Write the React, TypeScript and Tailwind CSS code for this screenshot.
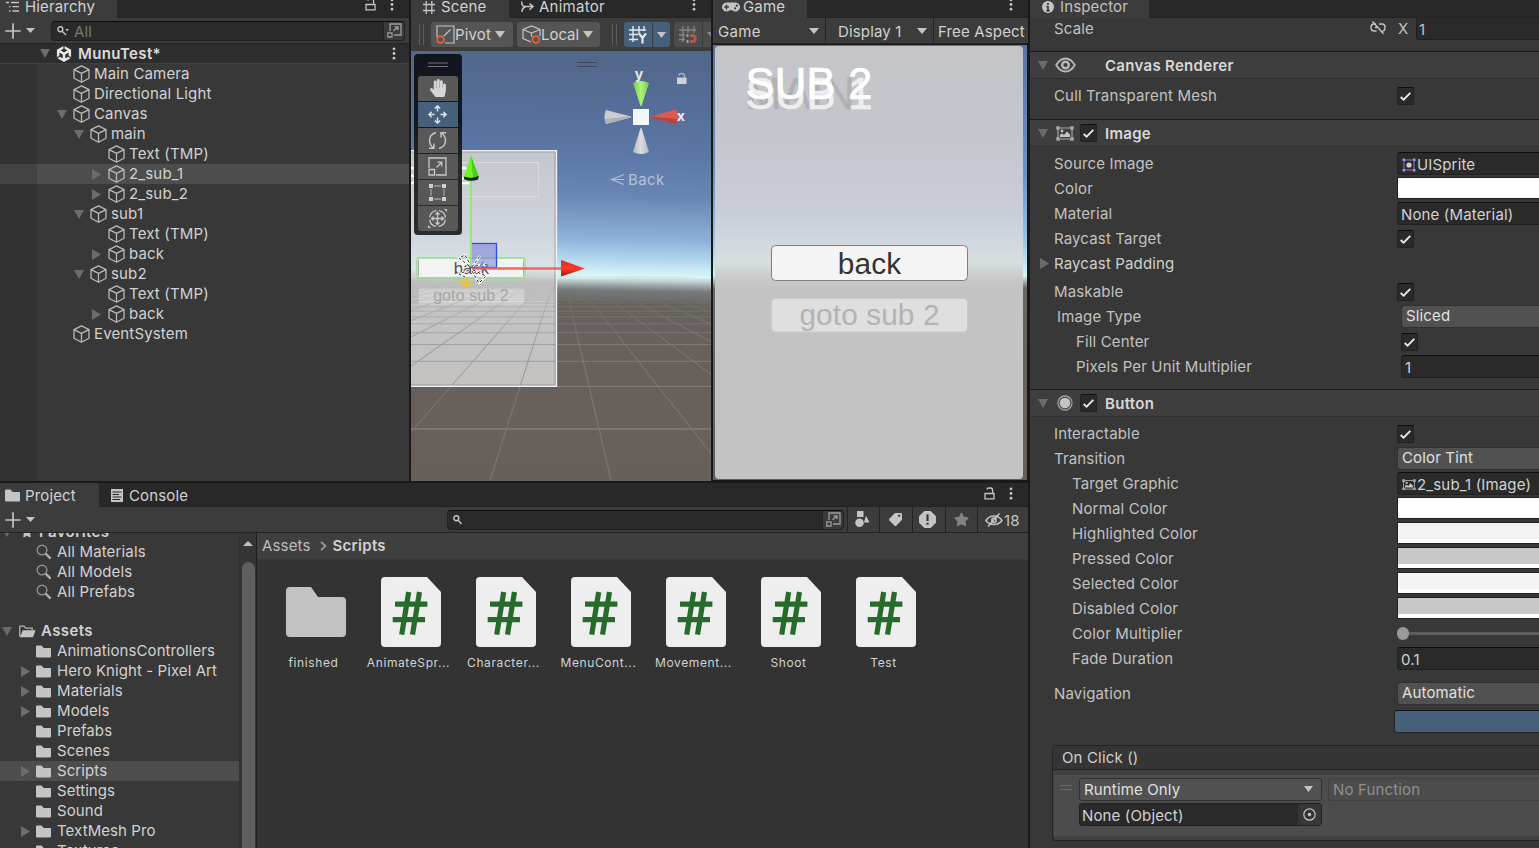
import React from "react";
import { SiUnity } from "react-icons/si";
import { FaGamepad, FaHandPaper, FaStar, FaTag } from "react-icons/fa";

/* ---------- icons ---------- */

function Cube({ className = "" }: { className?: string }) {
  return (
    <svg width="17" height="18" viewBox="0 0 17 18" fill="none" stroke="#b9b9b9" strokeWidth="1.3" strokeLinejoin="round" className={"shrink-0 " + className}>
      <path d="M8.5 .9 16 4.6V13.2L8.5 17.2 1 13.2V4.6ZM1 4.6 8.5 8.4 16 4.6M8.5 8.4V17" />
    </svg>
  );
}

function Down({ color = "#6c6c6c", w = 10, h = 9 }: { color?: string; w?: number; h?: number }) {
  return (
    <svg width={w} height={h} viewBox="0 0 10 9" preserveAspectRatio="none" className="shrink-0">
      <path d="M0 0H10L5 9Z" fill={color} />
    </svg>
  );
}

function Right() {
  return (
    <svg width="9" height="11" viewBox="0 0 9 11" className="shrink-0">
      <path d="M0 0 9 5.5 0 11Z" fill="#6c6c6c" />
    </svg>
  );
}

function Dots({ className = "" }: { className?: string }) {
  return (
    <svg width="4" height="13" viewBox="0 0 4 13" fill="#c4c4c4" className={"shrink-0 " + className}>
      <circle cx="2" cy="1.8" r="1.4" />
      <circle cx="2" cy="6.5" r="1.4" />
      <circle cx="2" cy="11.2" r="1.4" />
    </svg>
  );
}

function Lock({ className = "" }: { className?: string }) {
  return (
    <svg width="11" height="13" viewBox="0 0 11 13" fill="none" stroke="#c4c4c4" strokeWidth="1.3" className={"shrink-0 " + className}>
      <path d="M1 6.5H10V11.8H1ZM8.6 6.5V3.2Q8.6 1 6.6 1H4.8Q3.2 1 3 2.6" />
    </svg>
  );
}

function AddMenu() {
  return (
    <div className="flex items-center">
      <svg width="16" height="16" viewBox="0 0 16 16">
        <path d="M.3 8H15.7M8 .3V15.7" stroke="#c4c4c4" strokeWidth="1.7" />
      </svg>
      <div className="ml-[5px] flex">
        <Down color="#c4c4c4" w={9} h={5} />
      </div>
    </div>
  );
}

function Pop() {
  return (
    <svg width="15" height="15" viewBox="0 0 15 15" fill="none" stroke="#9d9d9d" strokeWidth="1.3">
      <path d="M3 8V1H14V12H7M.8 9.8H5V14H.8ZM6.5 8 10.8 3.8M7.5 3.8H11V7.3" />
    </svg>
  );
}

function Folder({ w = 15, h = 13 }: { w?: number; h?: number }) {
  return (
    <svg width={w} height={h} viewBox="0 0 15 13" fill="#c4c4c4" className="shrink-0">
      <path d="M0 1.6Q0 .6 1 .6H5.6L7.6 3H14Q15 3 15 4V11.6Q15 12.6 14 12.6H1Q0 12.6 0 11.6Z" />
    </svg>
  );
}

function OpenFolder() {
  return (
    <svg width="17" height="13" viewBox="0 0 17 13" className="shrink-0">
      <path d="M.7 11.5V1.2H5L6.8 3.2H13.2V5" fill="none" stroke="#b0b0b0" strokeWidth="1.3" />
      <path d="M3.8 5.2H16.6L14 12.2H.8Z" fill="#c4c4c4" />
    </svg>
  );
}

function Magnifier() {
  return (
    <svg width="16" height="16" viewBox="0 0 16 16" fill="none" className="shrink-0">
      <circle cx="6" cy="6" r="4.8" stroke="#909090" strokeWidth="1.4" />
      <path d="M9.8 9.8 14.6 14.6" stroke="#b5b5b5" strokeWidth="2.2" />
    </svg>
  );
}

function ImageIcon({ s = 18 }: { s?: number }) {
  return (
    <svg width={s} height={(s * 15) / 18} viewBox="0 0 18 15" className="shrink-0">
      <path d="M2 2H16V13H2Z" fill="none" stroke="#a8a8a8" strokeWidth="1.2" />
      <path d="M.3 .3H3.7V3.7H.3ZM14.3 .3H17.7V3.7H14.3ZM.3 11.3H3.7V14.7H.3ZM14.3 11.3H17.7V14.7H14.3Z" fill="#a8a8a8" />
      <path d="M4 11V8.5L6 7.5 8 9 11 5.5 14 8.5V11Z" fill="#c4c4c4" />
      <circle cx="6" cy="5" r="1.4" fill="#c4c4c4" />
    </svg>
  );
}

function CheckBox() {
  return (
    <span className="flex h-[18px] w-[17px] shrink-0 items-center justify-center rounded-[2px] border border-[#212121] border-t-[#0d0d0d] bg-[#2a2a2a]">
      <svg width="11" height="9" viewBox="0 0 11 9" fill="none" stroke="#e8e8e8" strokeWidth="1.9">
        <path d="M.7 5 3.6 7.6 10.3 .8" />
      </svg>
    </span>
  );
}

/* ---------- hierarchy ---------- */

type Node = { name: string; pad: string; arrow?: "down" | "right"; selected?: boolean };

const NODES: Node[] = [
  { name: "Main Camera", pad: "pl-[20px]" },
  { name: "Directional Light", pad: "pl-[20px]" },
  { name: "Canvas", pad: "pl-[20px]", arrow: "down" },
  { name: "main", pad: "pl-[37px]", arrow: "down" },
  { name: "Text (TMP)", pad: "pl-[55px]" },
  { name: "2_sub_1", pad: "pl-[55px]", arrow: "right", selected: true },
  { name: "2_sub_2", pad: "pl-[55px]", arrow: "right" },
  { name: "sub1", pad: "pl-[37px]", arrow: "down" },
  { name: "Text (TMP)", pad: "pl-[55px]" },
  { name: "back", pad: "pl-[55px]", arrow: "right" },
  { name: "sub2", pad: "pl-[37px]", arrow: "down" },
  { name: "Text (TMP)", pad: "pl-[55px]" },
  { name: "back", pad: "pl-[55px]", arrow: "right" },
  { name: "EventSystem", pad: "pl-[20px]" },
];

function Hierarchy() {
  return (
    <section className="flex w-[409px] shrink-0 flex-col bg-[#383838]">
      <div className="flex h-[18px] shrink-0 border-b border-[#232323] bg-[#282828]">
        <div className="-mb-px flex w-[117px] items-center bg-[#3c3c3c] pb-[4px] pl-[6px]">
          <svg width="14" height="12" viewBox="0 0 14 12" fill="none" stroke="#c4c4c4" strokeWidth="1.3">
            <path d="M0 1.5H3M5 1.5H13M3 5.7H4.5M6.500 5.7H13M3 10H4.5M6.500 10H13" />
          </svg>
          <span className="ml-[5px] pb-[2px]">Hierarchy</span>
        </div>
        <Lock className="-mt-[2px] ml-[248px]" />
        <Dots className="-mt-[2px] ml-[14px]" />
      </div>
      <div className="flex h-[25px] shrink-0 items-center bg-[#3c3c3c] pl-[5px]">
        <AddMenu />
        <div className="ml-[16px] flex h-[20px] w-[354px] items-center rounded-[4px] border border-[#212121] border-t-[#0d0d0d] bg-[#2a2a2a] pl-[5px]">
          <svg width="12" height="10" viewBox="0 0 12 10" fill="none" stroke="#c4c4c4" strokeWidth="1.4">
            <circle cx="3.3" cy="3.3" r="2.5" />
            <path d="M5.2 5.2 9 9" />
            <path d="M8.3 3H12L10.1 5.2Z" fill="#c4c4c4" stroke="none" />
          </svg>
          <span className="ml-[5px] pt-px text-[#7a7a7a]">All</span>
          <span className="ml-auto flex h-full w-[21px] items-center justify-center rounded-r-[4px] border-l border-[#212121] bg-[#3a3a3a]">
            <Pop />
          </span>
        </div>
      </div>
      <div className="flex h-[21px] shrink-0 items-center border-t border-b border-t-[#232323] border-b-[#3f3f3f] bg-[#2d2d2d] pl-[40px]">
        <Down />
        <SiUnity className="ml-[6px] text-[#e6e6e6]" size={16} />
        <span className="ml-[6px] font-semibold tracking-[0.35px] text-[#dcdcdc]">MunuTest*</span>
        <Dots className="mr-[13px] ml-auto" />
      </div>
      <div className="flex flex-1 flex-col bg-[linear-gradient(to_right,#323232_37px,#383838_37px)]">
        {NODES.map((n, i) => (
          <div key={i} className={"flex h-[20px] items-center " + (n.selected ? "bg-[linear-gradient(to_right,#424242_37px,#4d4d4d_37px)]" : "")}>
            <div className="w-[37px]" />
            <div className={"flex items-center " + n.pad}>
              <div className="flex w-[16px]">{n.arrow === "down" ? <Down /> : n.arrow === "right" ? <Right /> : null}</div>
              <Cube />
              <span className="ml-[4px] pb-[2px]">{n.name}</span>
            </div>
          </div>
        ))}
      </div>
    </section>
  );
}

/* ---------- scene ---------- */

const ROWS = Array.from({ length: 26 }, (_, k) => 262 + 1 / (0.00599 + 0.00204 * k));
const RAYS = Array.from({ length: 31 }, (_, k) => -70 + 121 * (k - 15));

function Tool({ children, active, end }: { children: React.ReactNode; active?: boolean; end?: string }) {
  return (
    <div className={"flex h-[25px] w-[40px] items-center justify-center pr-px pb-px " + (active ? "bg-[#46607c] " : "bg-[#585858] ") + (end ?? "")}>{children}</div>
  );
}

function SceneView() {
  return (
    <div className="relative h-[430px] w-[300px] overflow-hidden">
      <svg width="300" height="430" viewBox="411 51 300 430" className="block">
        <defs>
          <linearGradient id="sky" x1="0" y1="51" x2="-8" y2="481" gradientUnits="userSpaceOnUse">
            <stop offset="0" stopColor="#52678c" />
            <stop offset=".12" stopColor="#566f9b" />
            <stop offset=".22" stopColor="#5c78a6" />
            <stop offset=".31" stopColor="#6886b4" />
            <stop offset=".41" stopColor="#8fb1d8" />
            <stop offset=".46" stopColor="#b4d8ef" />
            <stop offset=".495" stopColor="#d8f6f8" />
            <stop offset=".505" stopColor="#d0e8e8" />
            <stop offset=".53" stopColor="#77797a" />
            <stop offset=".56" stopColor="#67625e" />
            <stop offset="1" stopColor="#675f5a" />
          </linearGradient>
          <linearGradient id="fade" x1="0" y1="278" x2="0" y2="345" gradientUnits="userSpaceOnUse">
            <stop offset="0" stopColor="#fff" stopOpacity=".1" />
            <stop offset="1" stopColor="#fff" />
          </linearGradient>
          <linearGradient id="panel" x1="0" y1="151" x2="0" y2="386" gradientUnits="userSpaceOnUse">
            <stop offset="0" stopColor="#c3c6cd" />
            <stop offset=".35" stopColor="#d0d5dd" />
            <stop offset=".5" stopColor="#dbe3e6" />
            <stop offset=".56" stopColor="#c4c5c5" />
            <stop offset="1" stopColor="#c3c2c1" />
          </linearGradient>
          <mask id="gridMask" maskUnits="userSpaceOnUse" x="411" y="51" width="300" height="430">
            <rect x="411" y="276" width="300" height="205" fill="url(#fade)" />
          </mask>
          <clipPath id="panelClip">
            <rect x="411" y="151" width="145" height="234" />
          </clipPath>
          <linearGradient id="coneG" x1="0" x2="1">
            <stop offset="0" stopColor="#7fc552" />
            <stop offset=".5" stopColor="#aaf57c" />
            <stop offset="1" stopColor="#7fc552" />
          </linearGradient>
          <linearGradient id="coneW" x1="0" x2="1">
            <stop offset="0" stopColor="#b5b8c0" />
            <stop offset=".5" stopColor="#dcdde1" />
            <stop offset="1" stopColor="#b5b8c0" />
          </linearGradient>
          <linearGradient id="coneR" x1="0" y1="0" x2="0" y2="1">
            <stop offset="0" stopColor="#d8281e" />
            <stop offset=".5" stopColor="#ff3a2a" />
            <stop offset="1" stopColor="#a5150e" />
          </linearGradient>
        </defs>
        <rect x="411" y="51" width="300" height="430" fill="url(#sky)" />
        <g mask="url(#gridMask)" fill="none" stroke="#7f7b78" strokeWidth="1">
          {ROWS.map((y, i) => (
            <path key={i} d={`M411 ${y.toFixed(1)}H711`} />
          ))}
          {RAYS.map((x, i) => (
            <path key={i} d={`M560 262 ${560 + x} 480`} />
          ))}
          <path d="M411 429H711" strokeWidth="1.6" />
        </g>
        <rect x="411" y="151" width="145" height="235" fill="url(#panel)" />
        <rect x="380" y="162.500" width="158.500" height="34" fill="none" stroke="#d8dade" strokeWidth="1" />
        <text x="403" y="184" fontFamily="Liberation Sans, sans-serif" fontSize="23" fill="#ffffff" stroke="#ffffff" strokeWidth=".4">SUB 2</text>

        <rect x="417" y="258" width="108" height="20" rx="2" fill="#f3f3f3" stroke="#8fdc8a" strokeWidth="1.3" />
        <path d="M418.500 260V276M523.500 260V276" stroke="#8c8c8c" strokeWidth=".7" />
        <rect x="418" y="288" width="107" height="17" rx="2" fill="#d9d9d9" stroke="#c0c0c0" strokeWidth="1" />
        <text x="471" y="301" textAnchor="middle" fontFamily="Liberation Sans, sans-serif" fontSize="16" fill="#a9a9a9" letterSpacing=".1">goto sub 2</text>
        <text x="471.500" y="274" textAnchor="middle" fontFamily="Liberation Sans, sans-serif" fontSize="16.500" fill="#505050">back</text>
        <g mask="url(#gridMask)">
          <g stroke="#979694" strokeWidth="1" clipPath="url(#panelClip)">
            {ROWS.filter((y) => y < 386).map((y, i) => (
              <path key={i} d={`M411 ${y.toFixed(1)}H556`} strokeOpacity=".8" />
            ))}
            {RAYS.filter((x) => x < 0).map((x, i) => (
              <path key={i} d={`M560 262 ${560 + x} 480`} />
            ))}
          </g>
        </g>
        <path d="M411 150.800H556.500V386.200H411" fill="none" stroke="#eef0f2" strokeWidth="1.400" />
        <path d="M411 385H555V152H411" fill="none" stroke="#777" strokeWidth=".5" />
        <rect x="471" y="243.500" width="25.500" height="24" fill="#6a74d8" fillOpacity=".5" stroke="#2d4fe0" strokeWidth="1.300" />
        <g fill="none">
          <path d="M469 266 459 258 465 255 471 266M472 267 480 256M475 266 488 264M473 270 486 276 479 283 472 271M469 270 459 274 465 277" stroke="#fff" strokeWidth="2.200" />
          <path d="M469 266 459 258 465 255 471 266M472 267 480 256M475 266 488 264M473 270 486 276 479 283 472 271M469 270 459 274 465 277" stroke="#333" strokeWidth="1" strokeDasharray="3 2" />
        </g>
        <path d="M460 281 466 286 472 281M466 277V286" stroke="#f2c713" strokeWidth="2.200" fill="none" />
        <path d="M471 180V266" stroke="#8cf060" strokeWidth="2" />
        <path d="M463.500 177 471 155.500 478.800 177Z" fill="#6ef52a" />
        <path d="M471 155.500 478.800 177H473Z" fill="#4fcb18" />
        <path d="M463.500 176.500Q471 179 478.800 176L478 179.500Q471 182 464.500 179.500Z" fill="#1a2014" />
        <path d="M472 268.500H562" stroke="#ef5a50" strokeWidth="2.400" strokeOpacity=".9" />
        <path d="M561 260 585 268.500 561 276.500Z" fill="url(#coneR)" />

        <path d="M577 62.500H597M577 66.500H597" stroke="#3e4857" strokeWidth="1.200" />
        <path d="M633 83Q641 79 649 83L641.500 106H640.500Z" fill="url(#coneG)" />
        <path d="M633 152Q641 156 649 152L641.500 128H640.500Z" fill="url(#coneW)" />
        <path d="M606 110Q603 117 606 124L631 117.500V116.500Z" fill="#cbccd1" />
        <path d="M606 124 631 117.500V116.500L605 119Z" fill="#aeb0b8" />
        <path d="M676 109.500Q680 117 676 124.500L651 117.500V116.500Z" fill="#dd5b50" />
        <path d="M676 124.500 651 117.500V116.500L677 119Z" fill="#b5443d" />
        <rect x="633" y="109" width="16" height="16" fill="#f4f7fd" />
        <text x="639" y="78.500" textAnchor="middle" fontFamily="Inter, sans-serif" fontSize="14" fontWeight="700" fill="#e8eaee">y</text>
        <text x="681" y="121" textAnchor="middle" fontFamily="Inter, sans-serif" fontSize="14" fontWeight="700" fill="#e8eaee">x</text>
        <path d="M677 77.500H686.500V84H677Z" fill="#cdd1da" />
        <path d="M679 75.500Q679 73.500 681.500 73.500 684.500 73.500 684.500 76V78" fill="none" stroke="#aab3c4" strokeWidth="1.400" />
        <path d="M624 174.500 611.500 179.500 624 184.500M611.500 179.500H624" fill="none" stroke="#aebfd6" strokeWidth="1.100" />
        <text x="628" y="185" fontFamily="Inter, sans-serif" fontSize="15" letterSpacing=".4" fill="#b4c2d6">Back</text>
      </svg>
      <div className="absolute top-[3px] left-[3px] flex h-[181px] w-[48px] flex-col items-center gap-px rounded-[4px] bg-[linear-gradient(to_bottom,#10151f_0%,#14181f_40%,#262728_60%,#2a2b2c_100%)] pt-[8px]">
        <svg width="20" height="6" viewBox="0 0 20 6" className="mb-[7px]">
          <path d="M0 1H20M0 4.500H20" stroke="#777" strokeWidth="1" />
        </svg>
        <Tool end="rounded-t-[3px]">
          <FaHandPaper size={18} color="#d6d6d6" />
        </Tool>
        <Tool active>
          <svg width="19" height="19" viewBox="0 0 19 19" fill="none" stroke="#e4e8ee" strokeWidth="1.400">
            <path d="M9.500 6.500V1M9.500 12.500V18M6.500 9.500H1M12.500 9.500H18M6.800 3.600 9.500 .9 12.200 3.600M6.800 15.400 9.500 18.100 12.200 15.400M3.600 6.800 .9 9.500 3.600 12.200M15.400 6.800 18.100 9.500 15.400 12.200" />
          </svg>
        </Tool>
        <Tool>
          <svg width="19" height="19" viewBox="0 0 19 19" fill="none" stroke="#c8c8c8" strokeWidth="1.400">
            <path d="M8 1.500Q1.500 3.500 1.500 9.500 1.500 14 5.500 17M1 17.200H6V12.500M11 17.500Q17.500 15.500 17.500 9.500 17.500 5 13.500 2M18 1.800H13V6.500" />
          </svg>
        </Tool>
        <Tool>
          <svg width="19" height="19" viewBox="0 0 19 19" fill="none" stroke="#c8c8c8" strokeWidth="1.300">
            <path d="M1 11V1H18V18H8M1 12.500H6.500V18H1ZM8.500 10.500 13.500 5.500M9.500 5.200H13.800V9.500" />
          </svg>
        </Tool>
        <Tool>
          <svg width="19" height="19" viewBox="0 0 19 19" fill="#d0d0d0">
            <path d="M3 3H16V16H3Z" fill="none" stroke="#a0a0a0" strokeWidth="1.300" />
            <path d="M0 0H6V6H0ZM13 0H19V6H13ZM0 13H6V19H0ZM13 13H19V19H13Z" fill="#585858" />
            <path d="M1 1H5V5H1ZM14 1H18V5H14ZM1 14H5V18H1ZM14 14H18V18H14Z" />
          </svg>
        </Tool>
        <Tool end="rounded-b-[3px]">
          <svg width="21" height="21" viewBox="0 0 21 21" fill="none" stroke="#c8c8c8" strokeWidth="1.300">
            <circle cx="10.500" cy="10.500" r="8" strokeDasharray="10.070 2.500" strokeDashoffset="-1.250" />
            <path d="M10.500 4.500V16.500M4.500 10.500H16.500M8.500 6.500 10.500 4.500 12.500 6.500M8.500 14.500 10.500 16.500 12.500 14.500M6.500 8.500 4.500 10.500 6.500 12.500M14.500 8.500 16.500 10.500 14.500 12.500" />
            <path d="M17 1H20V4ZM1 17V20H4Z" fill="#c8c8c8" stroke="none" />
          </svg>
        </Tool>
      </div>
    </div>
  );
}

function Grip() {
  return (
    <svg width="5" height="21" viewBox="0 0 5 21" className="shrink-0">
      <path d="M.5 0V21M4.500 0V21" stroke="#5c5c5c" />
    </svg>
  );
}

function Scene() {
  return (
    <section className="flex w-[300px] shrink-0 flex-col bg-[#3c3c3c]">
      <div className="flex h-[18px] shrink-0 border-b border-[#232323] bg-[#282828]">
        <div className="-mb-px flex w-[98px] items-center bg-[#3c3c3c] pb-[4px] pl-[12px]">
          <svg width="12" height="13" viewBox="0 0 12 13" fill="none" stroke="#c4c4c4" strokeWidth="1.300">
            <path d="M3.200 0V13M8.800 0V13M0 3.500H12M0 9.500H12" />
          </svg>
          <span className="ml-[6px] pb-[2px]">Scene</span>
        </div>
        <div className="flex items-center pb-[3px] pl-[12px]">
          <svg width="13" height="12" viewBox="0 0 13 12" fill="none" stroke="#c4c4c4" strokeWidth="1.500">
            <path d="M.8 .5V2.500Q1 5.500 5 5.500H11M1 11V10Q1.500 6.500 5 5.500M8.500 2.500 12 5.500 8.500 8.800" />
          </svg>
          <span className="ml-[5px] pb-[2px] tracking-[0.25px]">Animator</span>
        </div>
        <Dots className="-mt-[2px] mr-[15px] ml-auto" />
      </div>
      <div className="flex h-[33px] w-[300px] shrink-0 items-center overflow-hidden bg-[#3c3c3c] pl-[8px] whitespace-nowrap">
        <Grip />
        <div className="ml-[7px] flex h-[25px] w-[82px] shrink-0 items-center rounded-[3px] bg-[#555] pl-[5px]">
          <svg width="19" height="19" viewBox="0 0 19 19" fill="none" stroke="#c4c4c4" strokeWidth="1.200" className="shrink-0">
            <path d="M1 12V1H18V18H9M8 11 14.500 4.500" />
            <circle cx="4.500" cy="14.500" r="3.400" stroke="#e8643c" strokeWidth="1.700" />
          </svg>
          <span>Pivot</span>
          <div className="ml-[4px] flex"><Down color="#c4c4c4" h={7} /></div>
        </div>
        <div className="ml-[4px] flex h-[25px] w-[83px] shrink-0 items-center rounded-[3px] bg-[#555] pl-[5px]">
          <svg width="19" height="19" viewBox="0 0 19 19" fill="none" stroke="#c4c4c4" strokeWidth="1.200" className="shrink-0">
            <path d="M9 17 1 13.500V4.500L9.500 1 18 4.500V11M1 4.500 9.500 8 18 4.500M9.500 8V12" />
            <circle cx="14" cy="14.500" r="3.400" stroke="#e8643c" strokeWidth="1.700" />
          </svg>
          <span className="tracking-[-0.05px]">Local</span>
          <div className="ml-[4px] flex"><Down color="#c4c4c4" h={7} /></div>
        </div>
        <div className="ml-[12px] flex"><Grip /></div>
        <div className="ml-[7px] flex h-[25px] w-[28px] shrink-0 items-center justify-center rounded-l-[3px] bg-[#46607c]">
          <svg width="18" height="18" viewBox="0 0 18 18" fill="none" stroke="#e4e8ee" strokeWidth="1.400">
            <path d="M4 0V16M10 0V8M15 0V5M0 4H17M0 8.500H9M0 13.500H9" />
            <path d="M10 7.500 13.500 12 17 7.500M13.500 12V17.500" strokeWidth="2.200" />
          </svg>
        </div>
        <div className="ml-px flex h-[25px] w-[17px] shrink-0 items-center justify-center rounded-r-[3px] bg-[#46607c]">
          <Down color="#c4c4c4" w={9} h={6} />
        </div>
        <div className="ml-[4px] flex h-[25px] w-[28px] shrink-0 items-center justify-center rounded-l-[3px] bg-[#4c4c4c]">
          <svg width="18" height="18" viewBox="0 0 18 18" fill="none" stroke="#858585" strokeWidth="1.400">
            <path d="M4 0V16M9 0V7M15 0V7M0 4H17M0 9H6M0 13.500H6" />
            <path d="M11 9.500H13Q16.300 9.500 16.300 12.500 16.300 15.500 13 15.500H11" stroke="#a35f4b" strokeWidth="3" />
            <path d="M7.500 9.500H9.500M7.500 15.500H9.500" stroke="#a0a0a0" strokeWidth="3" />
          </svg>
        </div>
        <div className="ml-px flex h-[25px] w-[17px] shrink-0 items-center bg-[#4c4c4c] pl-[4px]">
          <Down color="#858585" w={9} h={6} />
        </div>
      </div>
      <SceneView />
    </section>
  );
}

/* ---------- game ---------- */

function Game() {
  return (
    <section className="flex w-[315px] shrink-0 flex-col bg-[#191919]">
      <div className="flex h-[18px] shrink-0 border-b border-[#232323] bg-[#282828]">
        <div className="-mb-px flex w-[94px] items-center bg-[#3c3c3c] pb-[4px] pl-[9px]">
          <FaGamepad size={18} color="#c4c4c4" />
          <span className="ml-[3px] pb-[2px]">Game</span>
        </div>
        <Dots className="-mt-[2px] mr-[15px] ml-auto" />
      </div>
      <div className="flex h-[26px] shrink-0 items-center border-b border-[#232323] bg-[#3c3c3c]">
        <div className="flex h-full w-[113px] items-center border-r border-[#232323] pt-[2px] pr-[6px] pb-px pl-[5px]">
          <span className="flex-1 tracking-[0.3px]">Game</span>
          <Down color="#c4c4c4" w={10} h={6} />
        </div>
        <div className="flex h-full w-[108px] items-center border-r border-[#232323] pt-[2px] pr-[6px] pb-px pl-[12px] whitespace-nowrap">
          <span className="flex-1">Display 1</span>
          <Down color="#c4c4c4" w={10} h={6} />
        </div>
        <span className="pt-px pl-[4px] whitespace-nowrap">Free Aspect</span>
      </div>
      <div className="mt-px flex h-[435px] w-[314px] bg-[linear-gradient(to_bottom,#5a74a0_0%,#6d93c6_30%,#9cc4e6_45%,#d8f4f6_53%,#6a6561_56%,#655d58_100%)] p-[2px] pt-px">
        <div className="h-[433px] w-[308px] rounded-[4px] bg-[linear-gradient(to_bottom,#c5c5c8_0%,#c4c6ce_20%,#c9cdd6_38%,#d0d7de_45%,#d8dedf_50%,#c8c8c8_54%,#c3c3c3_56%,#c3c3c3_100%)]">
          <svg width="308" height="433" viewBox="715 46 308 433" className="block" fontFamily="Liberation Sans, sans-serif">
            <text x="745.500" y="109" fontSize="43.500" fill="#b1b1b3" stroke="#b1b1b3" strokeWidth=".5">MAIN</text>
            <text x="745.500" y="109" fontSize="43.700" fill="#eeeef0" stroke="#eeeef0" strokeWidth=".7">SUB 1</text>
            <text x="745.500" y="99" fontSize="43.700" fill="#ffffff" stroke="#ffffff" strokeWidth=".7">SUB 2</text>
            <rect x="771.500" y="245.500" width="196" height="35" rx="4" fill="#f4f4f4" stroke="#7e7e7e" />
            <rect x="771.500" y="298.500" width="196" height="33.500" rx="4" fill="#dfdfdf" stroke="#c9c9c9" />
            <text x="869.500" y="274" textAnchor="middle" fontSize="29.800" fill="#333">back</text>
            <text x="869.500" y="324.500" textAnchor="middle" fontSize="29.800" letterSpacing=".1" fill="#b3b3b3">goto sub 2</text>
          </svg>
        </div>
      </div>
    </section>
  );
}

/* ---------- project ---------- */

const FOLDERS = [
  { name: "AnimationsControllers" },
  { name: "Hero Knight - Pixel Art", arrow: true },
  { name: "Materials", arrow: true },
  { name: "Models", arrow: true },
  { name: "Prefabs" },
  { name: "Scenes" },
  { name: "Scripts", arrow: true, selected: true },
  { name: "Settings" },
  { name: "Sound" },
  { name: "TextMesh Pro", arrow: true },
  { name: "Textures" },
];

const FILES = ["AnimateSpr...", "Character...", "MenuCont...", "Movement...", "Shoot", "Test"];

function Project() {
  return (
    <section className="flex h-[365px] w-[1028px] flex-col overflow-hidden bg-[#383838]">
      <div className="flex h-[24px] shrink-0 border-b border-[#232323] bg-[#282828]">
        <div className="-mb-px flex w-[99px] items-center rounded-tr-[3px] bg-[#3c3c3c] pt-[2px] pb-px pl-[5px]">
          <Folder />
          <span className="ml-[5px]">Project</span>
        </div>
        <div className="flex items-center pt-[2px] pl-[12px]">
          <svg width="12" height="13" viewBox="0 0 12 13" className="shrink-0">
            <rect width="12" height="13" fill="#c4c4c4" />
            <path d="M1.500 3H10.500M1.500 5.500H8M1.500 8H10.500M1.500 10.500H9" stroke="#282828" />
          </svg>
          <span className="ml-[6px]">Console</span>
        </div>
        <Lock className="mt-[4px] ml-auto" />
        <Dots className="mt-[4px] mr-[15px] ml-[14px]" />
      </div>
      <div className="flex h-[26px] shrink-0 items-center border-b border-[#232323] bg-[#3c3c3c] pl-[5px]">
        <AddMenu />
        <div className="ml-auto flex h-[20px] w-[397px] shrink-0 items-center rounded-[4px] border border-[#212121] border-t-[#0d0d0d] bg-[#2a2a2a] pl-[5px]">
          <svg width="9" height="10" viewBox="0 0 9 10" fill="none" stroke="#c4c4c4" strokeWidth="1.400">
            <circle cx="3.300" cy="3.300" r="2.500" />
            <path d="M5.200 5.200 8.500 9" />
          </svg>
          <span className="ml-auto flex h-full w-[21px] items-center justify-center rounded-r-[4px] border-l border-[#212121] bg-[#3a3a3a]">
            <Pop />
          </span>
        </div>
        <div className="ml-[3px] flex h-full w-[32px] shrink-0 items-center justify-center border-l border-[#232323] pr-[2px]">
          <svg width="15" height="17" viewBox="0 0 15 17" fill="#c4c4c4">
            <path d="M2 0H8.500V6H2ZM11 4.500 14.500 11.500H9Z" />
            <circle cx="4.500" cy="11.800" r="4.300" />
          </svg>
        </div>
        <div className="flex h-full w-[33px] shrink-0 items-center justify-center border-l border-[#232323] pr-[2px]">
          <FaTag size={13} color="#c4c4c4" className="rotate-90" />
        </div>
        <div className="flex h-full w-[33px] shrink-0 items-center justify-center border-l border-[#232323] pr-[3px]">
          <svg width="17" height="17" viewBox="0 0 16 16">
            <path d="M5 0H11L16 5V11L11 16H5L0 11V5Z" fill="#c4c4c4" />
            <path d="M8 3V9.500M8 11V13" stroke="#333" strokeWidth="2" />
          </svg>
        </div>
        <div className="flex h-full w-[32px] shrink-0 items-center justify-center border-l border-[#232323]">
          <FaStar size={15} color="#828282" />
        </div>
        <div className="flex h-full w-[51px] shrink-0 items-center border-l border-[#232323] pl-[7px]">
          <svg width="18" height="14" viewBox="0 0 18 14" fill="none" stroke="#c4c4c4" strokeWidth="1.500" className="shrink-0">
            <path d="M.8 7.500Q4 3 9 3 14 3 17 7.500 14 11.500 9 11.500 4 11.500 .8 7.500ZM3 13.500 14.500 .5" />
            <circle cx="9" cy="7.300" r="2.200" />
          </svg>
          <span className="ml-px pt-px text-[#c4c4c4]">18</span>
        </div>
      </div>
      <div className="flex min-h-0 flex-1">
        <div className="flex w-[239px] shrink-0 flex-col overflow-hidden">
          <div className="-mt-[11px] flex h-[20px] shrink-0 items-center pl-[2px]">
            <Down />
            <FaStar size={12} color="#c4c4c4" className="ml-[9px]" />
            <span className="ml-[6px] pb-[2px] font-semibold tracking-[0.4px]">Favorites</span>
          </div>
          {["All Materials", "All Models", "All Prefabs"].map((n) => (
            <div key={n} className="flex h-[20px] shrink-0 items-center pl-[36px]">
              <Magnifier />
              <span className="ml-[5px] pb-[2px]">{n}</span>
            </div>
          ))}
          <div className="mt-[19px] flex h-[20px] shrink-0 items-center pl-[2px]">
            <Down />
            <span className="ml-[7px]"><OpenFolder /></span>
            <span className="ml-[5px] pb-[2px] font-semibold tracking-[0.4px]">Assets</span>
          </div>
          {FOLDERS.map((f) => (
            <div key={f.name} className={"flex h-[20px] shrink-0 items-center pl-[21px] whitespace-nowrap " + (f.selected ? "bg-[#4d4d4d]" : "")}>
              <div className="w-[15px]">{f.arrow ? <Right /> : null}</div>
              <Folder />
              <span className="ml-[6px] pb-[2px] tracking-[0.08px]">{f.name}</span>
            </div>
          ))}
        </div>
        <div className="flex w-[18px] shrink-0 flex-col items-center border-r border-l border-r-[#1f1f1f] border-l-[#303030] bg-[#353535] pt-[8px]">
          <svg width="10" height="5" viewBox="0 0 10 5">
            <path d="M0 5H10L5 0Z" fill="#c4c4c4" />
          </svg>
          <div className="mt-[16px] w-[13px] flex-1 rounded-t-[7px] bg-[#5f5f5f]" />
        </div>
        <div className="flex flex-1 flex-col bg-[#333]">
          <div className="flex h-[27px] shrink-0 items-center border-b border-[#393939] bg-[#3f3f3f] pl-[5px]">
            <span className="pb-[2px] text-[#bdbdbd]">Assets</span>
            <svg width="7" height="10" viewBox="0 0 7 10" fill="none" stroke="#9a9a9a" strokeWidth="1.800" className="mr-[6px] ml-[9px]">
              <path d="M1 .8 5.500 5 1 9.200" />
            </svg>
            <span className="pb-[2px] font-semibold tracking-[0.3px]">Scripts</span>
          </div>
          <div className="flex pt-[17px] pl-[9px] text-[12px] tracking-[0.6px]">
            <div className="flex w-[95px] flex-col items-center">
              <svg width="60" height="70" viewBox="0 0 60 70" className="ml-[4px]">
                <path d="M0 14Q0 10 4 10H25L32 20H56Q60 20 60 24V56Q60 60 56 60H4Q0 60 0 56Z" fill="#c2c2c2" />
              </svg>
              <span className="mt-[6px] leading-5">finished</span>
            </div>
            {FILES.map((f) => (
              <div key={f} className="flex w-[95px] flex-col items-center">
                <svg width="60" height="70" viewBox="0 0 60 70" className="ml-[4px]">
                  <path d="M0 4Q0 0 4 0H46L60 15V66Q60 70 56 70H4Q0 70 0 66Z" fill="#eee" />
                  <path d="M27.700 15 20.700 57.700M38.500 15 31.500 57.700M14 27.200H46.400M11.700 42.700H44" stroke="#276b2a" strokeWidth="5.200" />
                </svg>
                <span className="mt-[6px] leading-5 whitespace-nowrap">{f}</span>
              </div>
            ))}
          </div>
        </div>
      </div>
    </section>
  );
}

/* ---------- inspector ---------- */

function Row({ label, pad = "w-[367px] pl-[24px]", children }: { label: string; pad?: string; children?: React.ReactNode }) {
  return (
    <div className="flex h-[25px] shrink-0">
      <div className={"flex shrink-0 items-center pb-[2px] whitespace-nowrap " + pad}>{label}</div>
      {children}
    </div>
  );
}

function Head({ icon, title, check }: { icon: React.ReactNode; title: string; check?: boolean }) {
  return (
    <div className="flex h-[28px] shrink-0 items-center border-t border-b border-t-[#1a1a1a] border-b-[#303030] bg-[#3e3e3e] pl-[8px]">
      <Down />
      <div className="ml-[6px] flex w-[22px] justify-center">{icon}</div>
      <div className="ml-[4px] w-[25px]">{check ? <CheckBox /> : null}</div>
      <span className="font-semibold tracking-[0.3px] text-[#d8d8d8]">{title}</span>
    </div>
  );
}

function Check() {
  return (
    <div className="flex items-center pb-px">
      <CheckBox />
    </div>
  );
}

function Field({ children }: { children: React.ReactNode }) {
  return (
    <div className="flex h-[23px] flex-1 items-center rounded-l-[3px] border border-r-0 border-[#212121] border-t-[#0f0f0f] bg-[#2a2a2a] pt-[2px] pl-[3px] whitespace-nowrap text-[#d2d2d2]">{children}</div>
  );
}

function Drop({ children }: { children: React.ReactNode }) {
  return (
    <div className="flex h-[23px] flex-1 items-center rounded-l-[3px] border border-r-0 border-[#303030] bg-[#515151] pb-[2px] pl-[4px] text-[#e0e0e0]">{children}</div>
  );
}

function Swatch({ color, solid }: { color: string; solid?: boolean }) {
  return (
    <div className="flex h-[22px] flex-1 flex-col border border-r-0 border-[#202020] bg-white">
      <div className={(solid ? "flex-1 " : "h-[16px] ") + color} />
    </div>
  );
}

const SUB = "w-[367px] pl-[42px]";
const SUB2 = "w-[371px] pl-[46px]";

function Inspector() {
  return (
    <section className="ml-[2px] flex w-[509px] shrink-0 flex-col bg-[#383838] text-[#c2c2c2]">
      <div className="flex h-[18px] shrink-0 border-b border-[#232323] bg-[#282828]">
        <div className="-mb-px flex w-[119px] items-center bg-[#3c3c3c] pb-[4px] pl-[12px]">
          <svg width="12" height="12" viewBox="0 0 12 12" className="shrink-0">
            <circle cx="6" cy="6" r="6" fill="#c4c4c4" />
            <path d="M6 2V4M6 5V10M4.500 5.500H6M4.300 9.700H7.700" stroke="#333" strokeWidth="1.600" />
          </svg>
          <span className="ml-[6px] pb-[2px]">Inspector</span>
        </div>
      </div>
      <div className="flex h-[33px] shrink-0">
        <span className="w-[340px] pl-[24px] leading-[21px]">Scale</span>
        <svg width="16" height="14" viewBox="0 0 16 14" fill="none" stroke="#c4c4c4" strokeWidth="1.400" className="mt-[3px]">
          <path d="M6 3H4Q1 3 1 6.500 1 10 4 10H6.500M9 3H12Q15 3 15 6.500 15 10 12.500 10M5 6.500H7M2.500 .5 13.500 12.800" />
        </svg>
        <span className="ml-[12px] w-[18px] leading-[21px]">X</span>
        <div className="h-[22px] flex-1 rounded-bl-[3px] border-b border-l border-[#202020] bg-[#2a2a2a] pl-[2px] leading-[23px]">1</div>
      </div>
      <Head
        title="Canvas Renderer"
        icon={
          <svg width="21" height="16" viewBox="0 0 21 16" fill="none" stroke="#b9b9b9">
            <path d="M1.200 8Q5 1.500 10.500 1.500 16 1.500 19.800 8 16 14.500 10.500 14.500 5 14.500 1.200 8Z" strokeWidth="1.800" />
            <circle cx="10.500" cy="8" r="3.300" strokeWidth="2.400" />
          </svg>
        }
      />
      <div className="flex shrink-0 flex-col pt-[5px] pb-[10px]">
        <Row label="Cull Transparent Mesh"><Check /></Row>
      </div>
      <Head title="Image" check icon={<ImageIcon />} />
      <div className="flex shrink-0 flex-col pt-[5px] pb-[9px]">
        <Row label="Source Image">
          <Field>
            <svg width="14" height="14" viewBox="0 0 14 14" className="mr-px ml-[1px] shrink-0">
              <path d="M2 2H12V12H2Z" fill="none" stroke="#8d76d2" />
              <path d="M.5 .5H3V3H.5ZM11 .5H13.500V3H11ZM.5 11H3V13.500H.5ZM11 11H13.500V13.500H11Z" fill="#a88ef0" />
              <circle cx="7" cy="7" r="2.600" fill="#d0d0d0" />
            </svg>
            UISprite
          </Field>
        </Row>
        <Row label="Color"><Swatch color="bg-white" solid /></Row>
        <Row label="Material"><Field>None (Material)</Field></Row>
        <Row label="Raycast Target"><Check /></Row>
        <div className="flex h-[25px] items-center pb-[2px] pl-[10px]">
          <Right />
          <span className="ml-[5px] text-[#d0d0d0]">Raycast Padding</span>
        </div>
        <div className="h-[3px]" />
        <Row label="Maskable"><Check /></Row>
        <Row label="Image Type" pad="w-[371px] pl-[27px]"><Drop>Sliced</Drop></Row>
        <Row label="Fill Center" pad={SUB2}><Check /></Row>
        <Row label="Pixels Per Unit Multiplier" pad={SUB2}><Field>1</Field></Row>
      </div>
      <Head
        title="Button"
        check
        icon={
          <svg width="16" height="16" viewBox="0 0 16 16">
            <circle cx="8" cy="8" r="7" fill="none" stroke="#a0a0a0" strokeWidth="1.300" />
            <circle cx="8" cy="8" r="5.300" fill="#c4c4c4" />
          </svg>
        }
      />
      <div className="flex shrink-0 flex-col pt-[5px]">
        <Row label="Interactable"><Check /></Row>
        <Row label="Transition"><Drop>Color Tint</Drop></Row>
        <Row label="Target Graphic" pad={SUB}>
          <Field>
            <span className="mr-px ml-[1px]"><ImageIcon s={14} /></span>
            2_sub_1 (Image)
          </Field>
        </Row>
        <Row label="Normal Color" pad={SUB}><Swatch color="bg-white" solid /></Row>
        <Row label="Highlighted Color" pad={SUB}><Swatch color="bg-[#f4f4f4]" /></Row>
        <Row label="Pressed Color" pad={SUB}><Swatch color="bg-[#c8c8c8]" /></Row>
        <Row label="Selected Color" pad={SUB}><Swatch color="bg-[#f4f4f4]" /></Row>
        <Row label="Disabled Color" pad={SUB}><Swatch color="bg-[#c8c8c8]" /></Row>
        <Row label="Color Multiplier" pad={SUB}>
          <div className="flex flex-1 items-center pb-[2px]">
            <div className="h-[13px] w-[12px] rounded-full bg-[#999]" />
            <div className="h-[3px] flex-1 bg-[#5e5e5e]" />
          </div>
        </Row>
        <Row label="Fade Duration" pad={SUB}><Field>0.1</Field></Row>
        <div className="h-[10px]" />
        <Row label="Navigation"><Drop>Automatic</Drop></Row>
        <div className="mt-[3px] ml-[364px] h-[23px] rounded-l-[3px] border border-r-0 border-[#242424] border-t-[#111] bg-[#46607c]" />
        <div className="mt-[12px] ml-[22px] h-[96px] rounded-l-[4px] border border-r-0 border-[#242424] bg-[#414141]">
          <div className="flex h-[24px] items-center rounded-tl-[4px] border-b border-[#242424] bg-[#353535] pl-[9px] text-[#d0d0d0]">On Click ()</div>
          <div className="mt-[5px] ml-px flex h-[61px] bg-[#4c4c4c] pt-[3px] pl-[6px]">
            <svg width="12" height="6" viewBox="0 0 12 6" className="mt-[7px] shrink-0">
              <path d="M0 .5H12M0 4.500H12" stroke="#6a6a6a" />
            </svg>
            <div className="ml-[7px] flex w-[243px] shrink-0 flex-col gap-[2px]">
              <div className="flex h-[23px] items-center rounded-[3px] border border-[#303030] bg-[#515151] pr-[8px] pb-px pl-[4px] text-[#e0e0e0]">
                <span className="flex-1">Runtime Only</span>
                <Down color="#c4c4c4" w={9} h={6} />
              </div>
              <div className="flex h-[23px] items-center rounded-[3px] border border-[#212121] bg-[#2a2a2a] pl-[2px] text-[#d2d2d2]">
                <span className="flex-1 pt-[2px]">None (Object)</span>
                <span className="flex h-full w-[23px] items-center justify-center bg-[#373737] pr-px">
                  <svg width="13" height="13" viewBox="0 0 13 13">
                    <circle cx="6.500" cy="6.500" r="5.700" fill="none" stroke="#c4c4c4" strokeWidth="1.200" />
                    <circle cx="6.500" cy="6.500" r="1.700" fill="#c4c4c4" />
                  </svg>
                </span>
              </div>
            </div>
            <div className="ml-[6px] flex h-[23px] flex-1 items-center rounded-l-[3px] border border-r-0 border-[#404040] pb-px pl-[4px] text-[#8f8f8f]">No Function</div>
          </div>
        </div>
      </div>
    </section>
  );
}

export default function App() {
  return (
    <div className="flex h-[848px] w-[1539px] overflow-hidden bg-[#191919] font-['Inter',sans-serif] text-[15px] leading-none tracking-[0.15px] text-[#d2d2d2]">
      <div className="flex w-[1028px] shrink-0 flex-col">
        <div className="flex h-[481px] shrink-0 gap-[2px]">
          <Hierarchy />
          <Scene />
          <Game />
        </div>
        <div className="mt-[2px]">
          <Project />
        </div>
      </div>
      <Inspector />
    </div>
  );
}
